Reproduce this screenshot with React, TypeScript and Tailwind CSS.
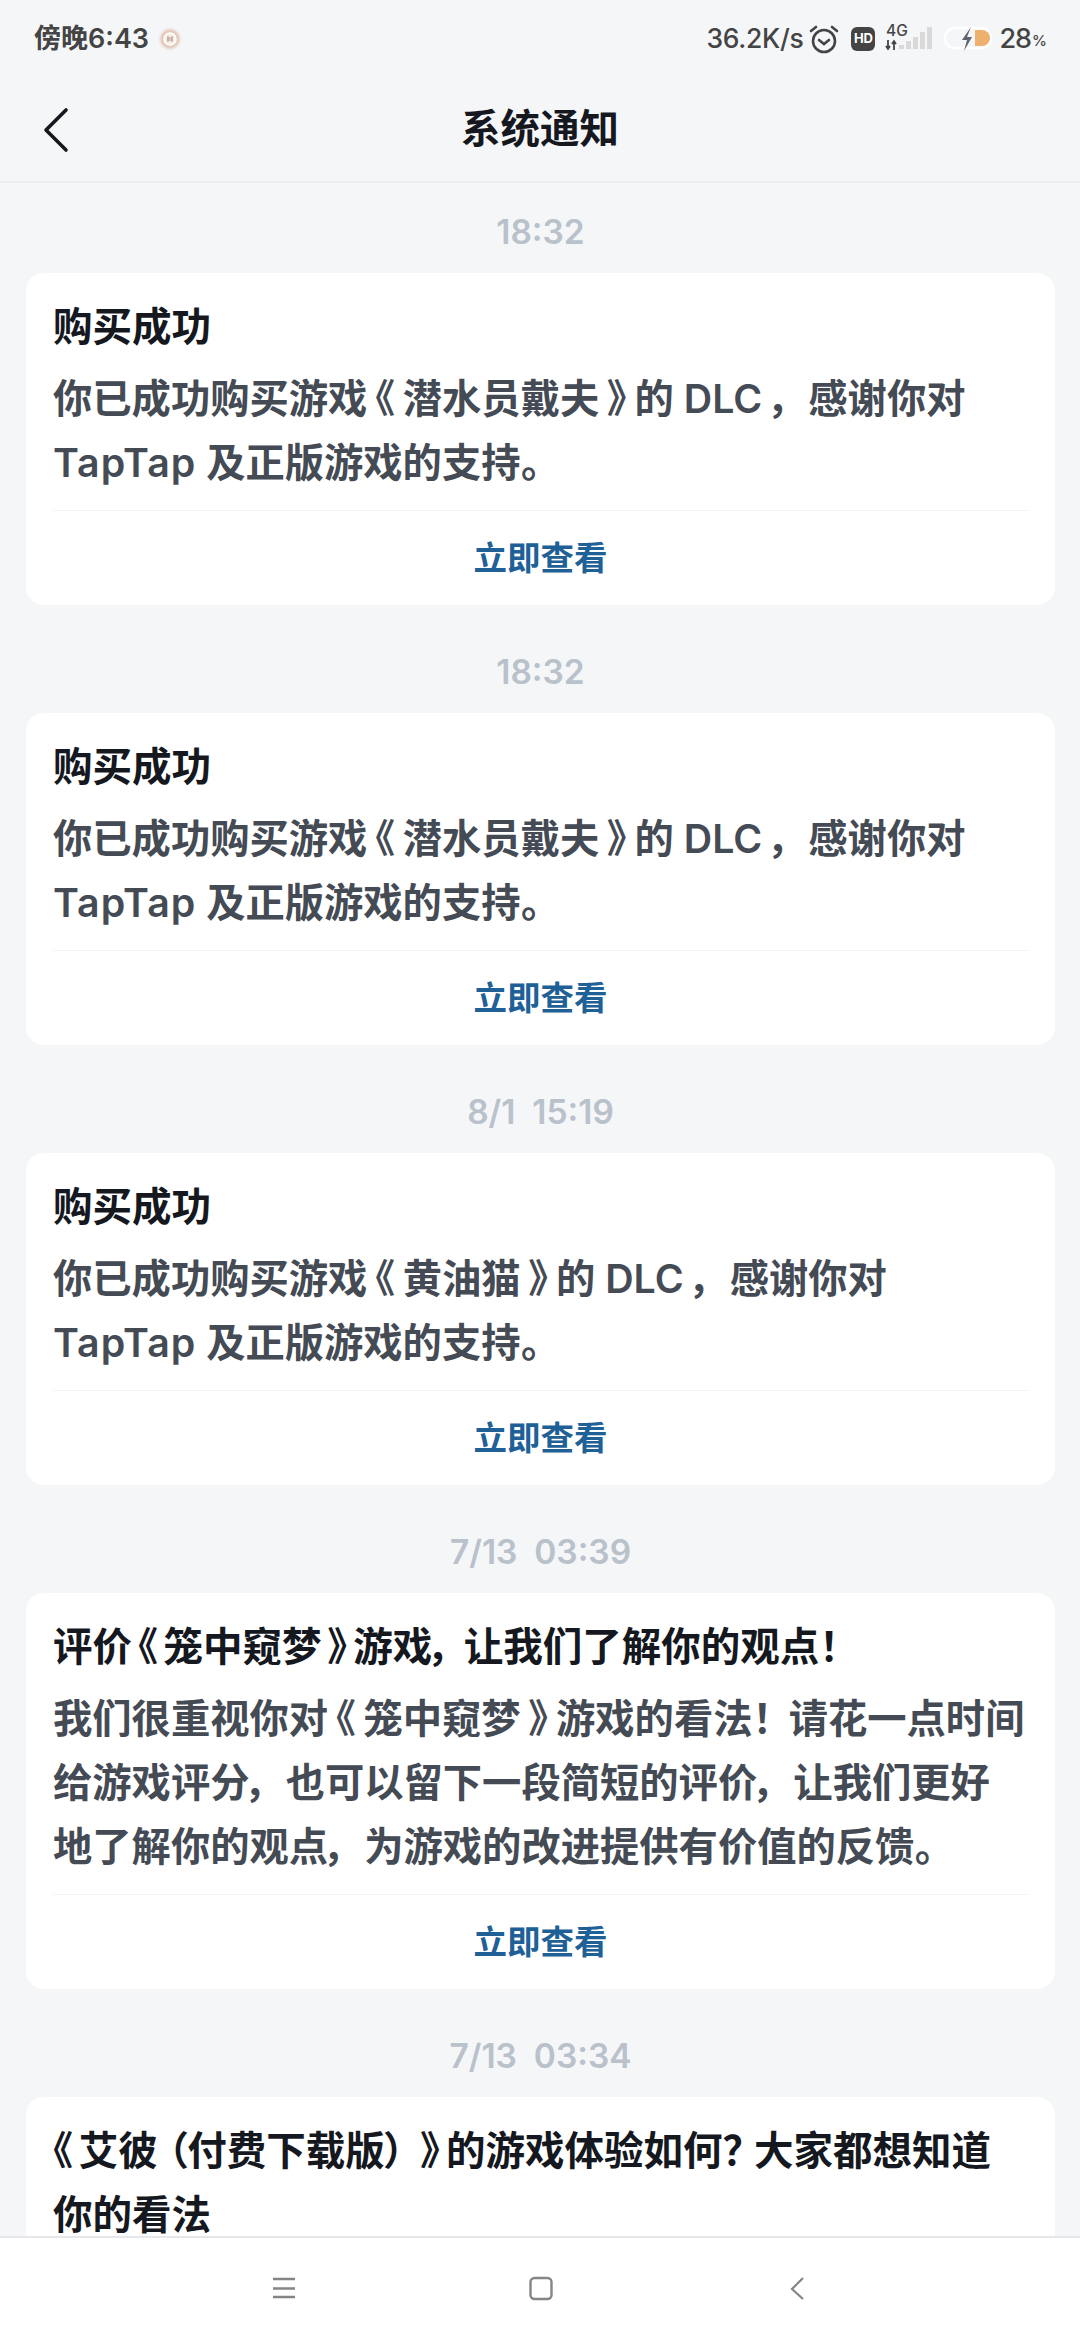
const F = { fontFamily: '"Inter","Noto Sans CJK SC",sans-serif' };

function Rich({ text, title }: { text: string; title?: boolean }) {
  const parts = text.split(/(《|》|，|！|？|（|）|TapTap)/).filter((p) => p !== "");
  return (
    <>
      {parts.map((p, i) => {
        let c = "";
        if (p === "《") c = i === 0 ? "pr-[0.15em]" : title ? "px-[0.15em]" : "px-[0.2em]";
        else if (p === "》") c = title ? "px-[0.15em]" : "px-[0.2em]";
        else if (p === "，" || p === "！" || p === "？") c = title ? "pr-[0.3em]" : "pr-[0.42em]";
        else if (p === "（") c = "pl-[0.25em]";
        else if (p === "）") c = "pr-[0.25em]";
        else if (p === "TapTap") c = "tracking-[1px]";
        return <span key={i} className={c}>{p}</span>;
      })}
    </>
  );
}

function Time({ t, first }: { t: string; first?: boolean }) {
  return <div className={`${first ? "h-[90px]" : "h-[108px]"} pb-[22px] flex items-end justify-center text-[33.5px] leading-[38px] font-semibold text-[#b9c1cb] whitespace-pre`}>{t}</div>;
}

function Card({ title, body, partial }: { title: string[]; body: string[]; partial?: boolean }) {
  return (
    <div className="bg-white rounded-[18px] px-[27px] [font-feature-settings:'palt']">
      <div className="pt-[22px] pb-[8px]">
        {title.map((l) => <div key={l} className="h-[64px] leading-[64px] text-[39.5px] font-bold text-[#15181e] whitespace-nowrap"><Rich text={l} title /></div>)}
      </div>
      <div className="pb-[15px]">
        {body.map((l) => <div key={l} className="h-[64px] leading-[64px] text-[39.3px] font-semibold text-[#454b55] whitespace-nowrap"><Rich text={l} /></div>)}
      </div>
      {!partial && <div className="h-px bg-[#f3f4f6]" />}
      {!partial && <div className="h-[94px] flex items-center justify-center text-[33.5px] font-semibold text-[#1f6196]">立即查看</div>}
    </div>
  );
}

function StatusRight() {
  return (
    <div className="flex items-center text-[#444]">
      <span className="text-[26.5px] font-medium tracking-[-0.3px]">36.2K/s</span>
      <svg width="32" height="32" viewBox="0 0 32 32" fill="none" stroke="#444" strokeWidth="2.6" className="ml-[5px]">
        <circle cx="16" cy="18" r="11" />
        <path d="M11 17l5 4 5-4" strokeLinecap="round" />
        <path d="M3 8l5-4M29 8l-5-4" strokeLinecap="round" />
      </svg>
      <div className="ml-[11px] w-[24px] h-[24px] rounded-[6px] bg-[#444] text-white text-[13px] font-bold flex items-center justify-center">HD</div>
      <svg width="48" height="30" viewBox="0 0 48 30" className="ml-[10px]">
        <text x="1" y="12" fontSize="15.5" fontWeight="500" fill="#444" fontFamily="Inter">4G</text>
        <path d="M3 16v9M1 22l2 3 2-3M9 26v-9M7 20l2-3 2 3" stroke="#444" strokeWidth="1.8" fill="none" />
        <path d="M14 21h5v4h-5zM21 17h5v8h-5zM28 13h5v12h-5zM35 8h5v17h-5zM42 3h5v22h-5z" fill="#d9d9d9" />
      </svg>
      <svg width="50" height="28" viewBox="0 0 50 28" className="ml-[10px]">
        <rect x="2" y="3" width="46" height="20" rx="10" fill="none" stroke="#fff" strokeWidth="2.5" />
        <path d="M32 5h7a8 8 0 0 1 0 16h-7z" fill="#eeb06e" />
        <path d="M28 2L19 15h5l-3 11 8-14h-5z" fill="#5f6470" />
      </svg>
      <span className="ml-[6px] text-[27px] font-medium tracking-[-1px]">28</span>
      <span className="ml-[1px] text-[15px] font-medium mt-[5px]">%</span>
    </div>
  );
}

export default function App() {
  return (
    <div style={F} className="w-[1080px] h-[2340px] bg-[#f5f6f8] flex flex-col overflow-hidden">
      <div className="h-[78px] flex items-center justify-between pl-[34px] pr-[33px] shrink-0">
        <div className="flex items-center text-[#444]">
          <span className="text-[27px] font-semibold">傍晚6:43</span>
          <svg width="24" height="24" viewBox="0 0 24 24" className="ml-[9px]">
            <circle cx="12" cy="12" r="10" fill="#e3c8bb" className="blur-[1px]" />
            <circle cx="12" cy="12" r="6" fill="#f8efe9" stroke="#fff" strokeWidth="1.5" />
            <path d="M10 9v6M14 9v6M9 11h6M9 13h6" stroke="#b99c8e" strokeWidth="1" />
          </svg>
        </div>
        <StatusRight />
      </div>
      <div className="h-[105px] shrink-0 flex items-center justify-center relative border-b-2 border-[#eceef1]">
        <svg width="30" height="46" viewBox="0 0 30 46" fill="none" stroke="#15181e" strokeWidth="3.6" strokeLinecap="round" strokeLinejoin="round" className="absolute left-[42px] top-[29px]">
          <path d="M24 3L4 23l20 20" />
        </svg>
        <div className="text-[39.5px] font-bold text-[#15181e]">系统通知</div>
      </div>
      <div className="flex-1 overflow-hidden pl-[26px] pr-[25px] min-h-0">
        <Time first t="18:32" />
        <Card title={["购买成功"]} body={["你已成功购买游戏《潜水员戴夫》的 DLC ，感谢你对", "TapTap 及正版游戏的支持。"]} />
        <Time t="18:32" />
        <Card title={["购买成功"]} body={["你已成功购买游戏《潜水员戴夫》的 DLC ，感谢你对", "TapTap 及正版游戏的支持。"]} />
        <Time t="8/1  15:19" />
        <Card title={["购买成功"]} body={["你已成功购买游戏《黄油猫》的 DLC ，感谢你对", "TapTap 及正版游戏的支持。"]} />
        <Time t="7/13  03:39" />
        <Card title={["评价《笼中窥梦》游戏，让我们了解你的观点！"]} body={["我们很重视你对《笼中窥梦》游戏的看法！请花一点时间", "给游戏评分，也可以留下一段简短的评价，让我们更好", "地了解你的观点，为游戏的改进提供有价值的反馈。"]} />
        <Time t="7/13  03:34" />
        <Card partial title={["《艾彼（付费下载版）》的游戏体验如何？大家都想知道", "你的看法"]} body={[]} />
      </div>
      <div className="h-[104px] shrink-0 bg-white border-t-2 border-[#e6e7ea] flex items-center justify-center">
        <svg width="560" height="40" viewBox="0 0 560 40" fill="none">
          <path d="M13 10h22M13 19.500h22M13 28h22" stroke="#858585" strokeWidth="2.6" />
          <rect x="270.500" y="9" width="21" height="21" rx="4" stroke="#858585" strokeWidth="2.4" />
          <path d="M543 9l-11 11 11 10" stroke="#858585" strokeWidth="2.2" />
        </svg>
      </div>
    </div>
  );
}
